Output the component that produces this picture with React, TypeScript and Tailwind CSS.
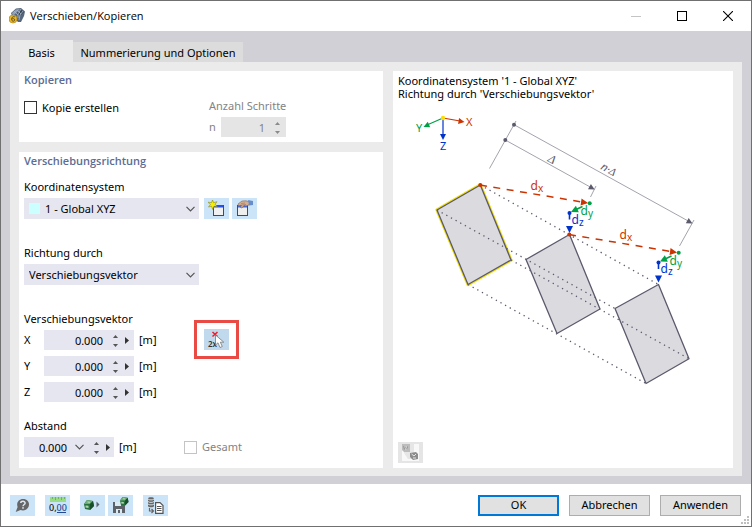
import type { ReactNode } from "react";

function Chevron() {
  return (
    <svg width="9" height="6" viewBox="0 0 9 6" fill="none" stroke="#555" strokeWidth="1.2" className="pointer-events-none">
      <path d="M.5.8 4.5 4.8 8.5.8" />
    </svg>
  );
}

function Stepper({ label, disabled = false }: { label: string; disabled?: boolean }) {
  const fill = disabled ? "#8a8a8a" : "#555";
  return (
    <span className="flex h-full w-3 flex-col justify-center gap-[5px]">
      <button type="button" aria-label={`${label} erhöhen`} disabled={disabled} className="flex h-1 items-end justify-center">
        <svg width="5" height="3" viewBox="0 0 5 3" fill={fill}><path d="M0 3 2.5 0 5 3Z" /></svg>
      </button>
      <button type="button" aria-label={`${label} verringern`} disabled={disabled} className="flex h-1 items-end justify-center">
        <svg width="5" height="3" viewBox="0 0 5 3" fill={fill}><path d="M0 0 2.5 3 5 0Z" /></svg>
      </button>
    </span>
  );
}

function More({ label }: { label: string }) {
  return (
    <button type="button" aria-label={label} className="flex h-full w-3 items-center justify-center">
      <svg width="4" height="7" viewBox="0 0 4 7" fill="#333"><path d="M0 0 4 3.5 0 7Z" /></svg>
    </button>
  );
}

function IconButton({ label, children, tone = "blue" }: { label: string; children: ReactNode; tone?: "blue" | "pressed" | "gray" }) {
  const bg = { blue: "bg-[#cce4f7]", pressed: "bg-[#c0d9ed]", gray: "bg-[#e5e5e5]" }[tone];
  return (
    <button type="button" aria-label={label} className={`flex h-[21px] w-[25px] shrink-0 items-center justify-center ${bg}`}>
      {children}
    </button>
  );
}

function Group({ title, className, children }: { title: string; className: string; children: ReactNode }) {
  return (
    <section className={`bg-white px-[5px] ${className}`}>
      <h2 className="h-5 font-['Open_Sans',sans-serif] text-[11px] leading-[18px] font-semibold text-[#5c6c94]">{title}</h2>
      {children}
    </section>
  );
}

function Dropdown({ id, label, value, swatch }: { id: string; label: string; value: string; swatch?: boolean }) {
  return (
    <div className="w-[175px]">
      <label htmlFor={id} className="block h-[21px] leading-5">{label}</label>
      <div className="relative">
        <select id={id} className={`h-[21px] w-full appearance-none bg-[#e6e6f1] pr-5 ${swatch ? "pl-[21px]" : "pl-[5px]"}`}>
          <option>{value}</option>
        </select>
        {swatch && <span className="pointer-events-none absolute top-[5px] left-[5px] size-[11px] bg-[#ccffff]" />}
        <span className="pointer-events-none absolute top-2 right-1"><Chevron /></span>
      </div>
    </div>
  );
}

function VectorRow({ axis }: { axis: string }) {
  const id = `vec-${axis}`;
  return (
    <div className="flex h-5 items-center">
      <label htmlFor={id} className="w-5">{axis}</label>
      <div className="flex h-5 w-[90px] items-center bg-[#e6e6f1]">
        <input id={id} defaultValue="0.000" className="h-5 w-[60px] bg-transparent pr-px text-right outline-none" />
        <span className="ml-[5px] h-5"><Stepper label={axis} /></span>
        <More label={`${axis} Optionen`} />
      </div>
      <span className="ml-[5px]">[m]</span>
    </div>
  );
}

function AppIcon() {
  return (
    <svg width="16" height="16" viewBox="0 0 16 16">
      <path d="M2 5 7 0.5 12 0 16 3.5 15 8 12 14 9 14 3 8Z" fill="#56677e" />
      <path d="M3 5 7 1.5 11 1 7 5 4 8Z" fill="#8fa2ba" />
      <path d="M8 5 12 1.5 15 4 11 8Z" fill="#3b485a" />
      <path d="M5 3 9 7M8 2 12 6M12 1 9 6 9 10M14 3 11 7 10 12" stroke="#a9b9ca" strokeWidth=".8" fill="none" />
      <circle cx="4" cy="11" r="4" fill="#e9b92c" stroke="#b68a19" strokeWidth=".7" />
      <path d="M5.800 8.800C3.500 8.200 2.500 9.800 2.600 11.400 2.800 13.800 5.800 13.600 5.700 11.800 5.600 10.400 3.600 10.300 2.800 11.400" fill="none" stroke="#654d13" strokeWidth="1" />
    </svg>
  );
}

function NewIcon() {
  return (
    <svg width="17" height="17" viewBox="0 0 17 17">
      <rect x="5.500" y="5.500" width="10" height="10" fill="#f1f1f1" stroke="#4a4a4a" />
      <path d="M6 5H15V7.500H6Z" fill="#2850e8" />
      <path d="M4.500 0 5.600 2.700 9 1.700 7 4.300 9.500 6.500 6 6.300 4.700 9.500 3.600 6.300 .5 7 2.400 4.600 0 2.200 3.500 2.700Z" fill="#f7ef00" stroke="#77751c" strokeWidth=".5" />
    </svg>
  );
}

function EditIcon() {
  return (
    <svg width="17" height="17" viewBox="0 0 17 17">
      <rect x="1.500" y="5.500" width="10" height="10" fill="#eee" stroke="#4a4a4a" />
      <path d="M2 5H11V7.500H2Z" fill="#4269e0" />
      <path d="M2 4 6 1 10 .8 14 2 13 5 10 6 8 5.500 6 8 4.500 7.500 5.500 5 2.500 6Z" fill="#d6ad8e" stroke="#806450" strokeWidth=".6" />
      <path d="M5 3.500 9 3M6 5 10 4.500" stroke="#87664f" strokeWidth=".5" />
      <path d="M12 0 17 1V5L13 5.500Z" fill="#668dcc" />
    </svg>
  );
}

function PickIcon() {
  return (
    <svg width="17" height="17" viewBox="0 0 17 17">
      <path d="M4.500 1 9.500 5.500M9.500 1 4.500 5.500" stroke="#ee1c25" strokeWidth="1.500" />
      <text x="0" y="16" fontSize="8" fontWeight="600" fill="#333" fontFamily="Noto Sans, sans-serif">2x</text>
      <path d="M7.500 4V14L10 11.800 12 16.500 14.300 15.500 12.300 11.200H15.800Z" fill="#fff" stroke="#777" strokeWidth=".8" />
    </svg>
  );
}

function HelpIcon() {
  return (
    <svg width="15" height="15" viewBox="0 0 15 15">
      <path d="M8 1C12 1 14 3.500 14 6.500S11.500 12.500 8 12.500C7 12.500 6.200 12.300 5.500 12L.7 14 2.600 9C1 4.500 4 1 8 1Z" fill="#666" />
      <path d="M5.800 5C5.900 2.700 10.300 2.800 10.100 5.200 10 6.500 8 6.600 8 8.300" fill="none" stroke="#d8e8f4" strokeWidth="1.500" />
      <rect x="7.200" y="9.200" width="1.600" height="1.500" fill="#d8e8f4" />
    </svg>
  );
}

function UnitsIcon() {
  return (
    <svg width="18" height="17" viewBox="0 0 18 17">
      <rect x="1" y="0" width="16" height="5" fill="#98dc83" />
      <path d="M3.500 0V2M6.500 0V3M9.500 0V2M12.500 0V3M15.500 0V2" stroke="#64a950" strokeWidth=".8" />
      <text x="0" y="14" fontSize="9" fontWeight="500" fill="#111" fontFamily="Noto Sans, sans-serif">0,<tspan fill="#234b91">00</tspan></text>
      <path d="M8 15.500H17" stroke="#234b91" />
    </svg>
  );
}

function Cube() {
  return (
    <g>
      <path d="M0 4 3 0 9 1 10 6 6 10 1 9Z" fill="#28733d" />
      <path d="M0 4 3 0 9 1 6 4Z" fill="#6dad78" />
      <path d="M6 4 9 1 10 6 6 10Z" fill="#174f2b" />
      <path d="M1.500 5.500 4.500 5.800V8L1.500 7.500Z" fill="#afd4b0" />
      <path d="M3.500 2 6 2.300" stroke="#c5dfc3" />
    </g>
  );
}

function LoadIcon() {
  return (
    <svg width="17" height="15" viewBox="0 0 17 15">
      <g transform="translate(0 2)"><Cube /></g>
      <path d="M12.500 3.500 15.500 6.500 12.500 9.500Z" fill="#5b6670" />
    </svg>
  );
}

function SaveIcon() {
  return (
    <svg width="17" height="17" viewBox="0 0 17 17">
      <path d="M1 5H11L13 7V16H1Z" fill="#5c6268" />
      <path d="M3 5H9V9H3ZM4 12H10V16H4Z" fill="#dceaf4" />
      <path d="M6 13H8V16H6Z" fill="#5c6268" />
      <g transform="translate(8 0) scale(.85)"><Cube /></g>
    </svg>
  );
}

function DatabaseIcon() {
  return (
    <svg width="17" height="17" viewBox="0 0 17 17">
      <path d="M1 1.500C1-.2 7-.2 7 1.500V9C7 10.700 1 10.700 1 9Z" fill="#666" />
      <path d="M1 2C2 3.200 6 3.200 7 2M1 4.500C2 5.700 6 5.700 7 4.500M1 7C2 8.200 6 8.200 7 7" fill="none" stroke="#deebf4" strokeWidth=".9" />
      <path d="M2.500 11V14H6M4.500 12 6.500 14 4.500 16" fill="none" stroke="#666" strokeWidth="1.200" />
      <path d="M8.600 5.600H13L16 8.500V16.400H8.600Z" fill="#fff" stroke="#555" strokeWidth="1.200" />
      <path d="M10 9.500H14.500M10 11.500H14.500M10 13.500H14.500" stroke="#555" />
    </svg>
  );
}

function PreviewIcon() {
  return (
    <svg width="17" height="17" viewBox="0 0 17 17">
      <rect width="17" height="17" fill="#f8f8f8" />
      <path d="M2 0H12V15H6L2 9Z" fill="#e6e6e6" />
      <path d="M0 0H8V8H2L0 6Z" fill="#bcbcbc" />
      <path d="M1 2H6V6H2Z" fill="#999" />
      <path d="M2 3 5 2.500 3 5.500 6 5" fill="none" stroke="#d0d0d0" />
      <path d="M8 9 14 8 16 10V15L11 16 8 13Z" fill="#8c8c8c" />
      <path d="M9.500 10 12 12 14 10M11 14H14" stroke="#e5e5e5" fill="none" />
    </svg>
  );
}

function Head({ x, y, angle, color, size }: { x: number; y: number; angle: number; color: string; size: number }) {
  return <path d="M0 0-1-.5V.5Z" fill={color} transform={`translate(${x} ${y}) rotate(${angle}) scale(${size})`} />;
}

function Component({ x, y, axis, color }: { x: number; y: number; axis: string; color: string }) {
  return (
    <text x={x} y={y} fill={color} fontSize="12">
      d<tspan fontSize="10" dy="2">{axis}</tspan>
    </text>
  );
}

const RED = "#cc3300";
const GREEN = "#00a046";
const BLUE = "#0033cc";
const INK = "#5b5a6c";

function Displacement() {
  return (
    <g>
      <path d="M480 185 582 202" stroke={RED} strokeWidth="1.500" strokeDasharray="7 6.500" />
      <Head x={588} y={203} angle={8} color={RED} size={7} />
      <circle cx="480.300" cy="185" r="2" fill={RED} />
      <circle cx="589.700" cy="203.300" r="2" fill={GREEN} />
      <path d="M582.500 206.500 575 210" stroke={GREEN} strokeWidth="1.500" />
      <Head x={571} y={212} angle={155} color={GREEN} size={7} />
      <circle cx="569.500" cy="213" r="2" fill={BLUE} />
      <path d="M569.500 213V219.500" stroke={BLUE} strokeWidth="1.600" />
      <Head x={569.5} y={233} angle={90} color={BLUE} size={7} />
      <Component x={530.5} y={189.5} axis="x" color={RED} />
      <Component x={580.5} y={215} axis="y" color={GREEN} />
      <Component x={571.5} y={223.5} axis="z" color={BLUE} />
    </g>
  );
}

function VectorDiagram() {
  return (
    <svg viewBox="398 103 330 290" className="block h-[290px] w-full" preserveAspectRatio="xMinYMin meet" fontFamily="Noto Sans, sans-serif" role="img" aria-label="Verschiebungsvektor">
      <path d="M443 118 427 125" stroke={GREEN} strokeWidth="1.200" />
      <Head x={423.5} y={127} angle={156} color={GREEN} size={6} />
      <path d="M443 118 460 121" stroke={RED} strokeWidth="1.200" />
      <Head x={464.5} y={122} angle={9} color={RED} size={6} />
      <path d="M443 118V135" stroke={BLUE} strokeWidth="1.200" />
      <Head x={443} y={140} angle={90} color={BLUE} size={6} />
      <circle cx="443" cy="118" r="2.200" fill="#ffdc00" />
      <text x="466" y="126" fontSize="11" fill={RED}>X</text>
      <text x="416" y="132" fontSize="11" fill={GREEN}>Y</text>
      <text x="440" y="150" fontSize="11" fill={BLUE}>Z</text>

      <path d="M489.500 168.500 516 121M514 124.700 690 222M505.300 140 592 188M596 186 590.500 197M694 220 679.500 246" stroke="#a3a3ad" fill="none" />
      <circle cx="514" cy="124.700" r="2" fill={INK} />
      <circle cx="505.300" cy="140" r="2" fill={INK} />
      <Head x={594.7} y={189.5} angle={29} color={INK} size={6} />
      <Head x={692.5} y={223.5} angle={29} color={INK} size={6} />
      <text transform="translate(547 161) rotate(28)" fontSize="12" fontStyle="italic" fill={INK} fontFamily="Liberation Serif, serif">Δ</text>
      <text transform="translate(600 169) rotate(28)" fontSize="11" fontStyle="italic" fill={INK}>n·<tspan fontFamily="Liberation Serif, serif">Δ</tspan></text>

      <g fill="#dbdadf" strokeLinejoin="round">
        <path d="M480.300 185 511 260 468 284.500 437 210Z" stroke="#f0df10" strokeWidth="3.200" />
        <path d="M480.300 185 511 260 468 284.500 437 210Z" stroke={INK} strokeWidth="1.300" />
        <path d="M569.500 234.500 600 309 557 333.500 526 259.500ZM658.500 284.500 689 358.700 646 383.500 615 308.500Z" stroke={INK} strokeWidth="1.300" />
      </g>
      <path d="M480.300 185 658.500 284.500M437 210 615 308.500M511 260 689 358.700M468 284.500 646 383.500" fill="none" stroke={INK} strokeWidth="1.300" strokeDasharray="1.300 4" />
      <Displacement />
      <g transform="translate(89 49.500)"><Displacement /></g>
    </svg>
  );
}

export default function App() {
  return (
    <div className="flex min-h-screen flex-col border border-[#707070] bg-white font-['Noto_Sans',sans-serif] text-[11px] leading-4 text-black">
      <header className="flex h-[30px] items-center pl-2">
        <AppIcon />
        <h1 className="ml-[5px] flex-1 font-['Open_Sans',sans-serif] text-[11px]">Verschieben/Kopieren</h1>
        <button type="button" aria-label="Minimieren" disabled className="flex h-full w-[46px] items-center justify-center">
          <svg width="10" height="10" stroke="#c4c4c4"><path d="M0 5.500H10" /></svg>
        </button>
        <button type="button" aria-label="Maximieren" className="flex h-full w-[46px] items-center justify-center">
          <svg width="10" height="10" fill="none" stroke="#000"><rect x=".5" y=".5" width="9" height="9" /></svg>
        </button>
        <button type="button" aria-label="Schließen" className="flex h-full w-[46px] items-center justify-center">
          <svg width="10" height="10" stroke="#000" strokeWidth="1.100"><path d="M0 0 10 10M10 0 0 10" /></svg>
        </button>
      </header>

      <main className="flex flex-1 flex-col bg-[#d1d0d6] px-[9px] pt-[9px] pb-2">
        <div role="tablist" className="flex h-[22px] items-end">
          <button type="button" role="tab" aria-selected="true" className="h-[22px] w-[63px] bg-[#ebebeb] pt-1">Basis</button>
          <button type="button" role="tab" aria-selected="false" className="h-5 w-[170px] bg-[#dcdcdc] pt-0.5">Nummerierung und Optionen</button>
        </div>

        <div role="tabpanel" className="flex flex-1 gap-2.5 bg-[#ebebeb] px-[9px] pt-[9px] pb-2">
          <div className="flex w-[364px] shrink-0 flex-col gap-2.5">
            <Group title="Kopieren" className="h-[71px]">
              <div className="flex pt-1.5">
                <label className="flex h-[21px] w-[185px] items-center gap-[5px]">
                  <input type="checkbox" className="size-[13px] appearance-none border border-[#333] bg-white checked:bg-[#0078d7]" />
                  Kopie erstellen
                </label>
                <div className="text-[#838383]">
                  <div className="h-5 leading-[18px]">Anzahl Schritte</div>
                  <div className="flex h-5 items-center">
                    <label htmlFor="steps" className="w-3">n</label>
                    <div className="flex h-5 w-[65px] items-center bg-[#e5e5e5]">
                      <input id="steps" disabled defaultValue="1" className="h-5 w-[45px] bg-transparent pr-px text-right" />
                      <span className="ml-[5px] h-5"><Stepper label="Anzahl" disabled /></span>
                    </div>
                  </div>
                </div>
              </div>
            </Group>

            <Group title="Verschiebungsrichtung" className="flex-1">
              <div className="flex items-end gap-[5px] pt-[5px]">
                <Dropdown id="system" label="Koordinatensystem" value="1 - Global XYZ" swatch />
                <div className="flex gap-[3px]">
                  <IconButton label="Neues Koordinatensystem"><NewIcon /></IconButton>
                  <IconButton label="Koordinatensystem bearbeiten"><EditIcon /></IconButton>
                </div>
              </div>
              <div className="pt-6">
                <Dropdown id="direction" label="Richtung durch" value="Verschiebungsvektor" />
              </div>
              <div className="flex gap-[35px] pt-6">
                <fieldset className="w-[135px]">
                  <legend className="h-[21px] leading-5">Verschiebungsvektor</legend>
                  <div className="flex flex-col gap-1.5">
                    <VectorRow axis="X" />
                    <VectorRow axis="Y" />
                    <VectorRow axis="Z" />
                  </div>
                </fieldset>
                <div className="mt-[11px] flex h-[39px] w-[45px] items-center justify-center border-3 border-[#ea4a44]">
                  <IconButton label="Vektor wählen" tone="pressed"><PickIcon /></IconButton>
                </div>
              </div>
              <div className="pt-[14px]">
                <label htmlFor="distance" className="block h-[21px] leading-5">Abstand</label>
                <div className="flex h-5 items-center">
                  <div className="flex h-5 w-[90px] items-center bg-[#e6e6f1]">
                    <input id="distance" defaultValue="0.000" className="h-5 w-11 bg-transparent pr-px text-right outline-none" />
                    <button type="button" aria-label="Abstand wählen" className="ml-[5px] flex h-5 w-3 items-center justify-center"><Chevron /></button>
                    <span className="ml-[5px] h-5"><Stepper label="Abstand" /></span>
                    <More label="Abstand Optionen" />
                  </div>
                  <span className="ml-[5px] w-[65px]">[m]</span>
                  <label className="flex items-center gap-[5px] text-[#838383]">
                    <input type="checkbox" disabled className="size-[13px] appearance-none border border-[#c4c4c4] bg-white" />
                    Gesamt
                  </label>
                </div>
              </div>
            </Group>
          </div>

          <aside className="flex min-w-0 flex-1 flex-col bg-white px-[5px] pt-[3px] pb-[5px]">
            <p className="h-[29px] leading-[13px]">Koordinatensystem '1 - Global XYZ'<br />Richtung durch 'Verschiebungsvektor'</p>
            <VectorDiagram />
            <div className="mt-auto">
              <IconButton label="Vorschau" tone="gray"><PreviewIcon /></IconButton>
            </div>
          </aside>
        </div>
      </main>

      <footer className="relative flex h-[42px] items-center justify-between pr-2.5 pl-[9px]">
        <div className="flex gap-2.5">
          <IconButton label="Hilfe"><HelpIcon /></IconButton>
          <IconButton label="Einheiten"><UnitsIcon /></IconButton>
          <div className="flex gap-[3px]">
            <IconButton label="Vorgabe laden"><LoadIcon /></IconButton>
            <IconButton label="Vorgabe speichern"><SaveIcon /></IconButton>
          </div>
          <IconButton label="Daten übernehmen"><DatabaseIcon /></IconButton>
        </div>
        <div className="flex gap-2.5">
          <button type="button" className="h-[21px] w-[81px] border-2 border-[#0078d7] bg-[#e1e1e1] leading-4">OK</button>
          <button type="button" className="h-[21px] w-[81px] border border-[#adadad] bg-[#e1e1e1] leading-4">Abbrechen</button>
          <button type="button" className="h-[21px] w-[81px] border border-[#adadad] bg-[#e1e1e1] leading-4">Anwenden</button>
        </div>
        <svg width="8" height="8" fill="#bfbfbf" className="absolute right-0.5 bottom-0.5">
          <path d="M6 0h2v2H6ZM3 3h2v2H3ZM6 3h2v2H6ZM0 6h2v2H0ZM3 6h2v2H3ZM6 6h2v2H6Z" />
        </svg>
      </footer>
    </div>
  );
}
